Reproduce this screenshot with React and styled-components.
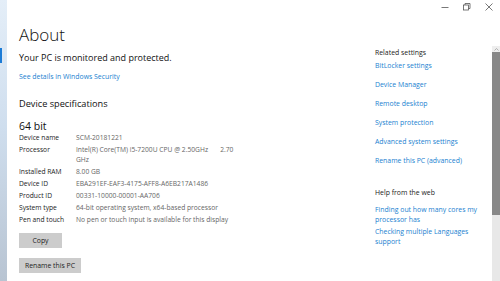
import React from "react";
import styled, { createGlobalStyle } from "styled-components";

const GlobalStyle = createGlobalStyle`
  html, body {
    margin: 0;
    padding: 0;
    background: #ffffff;
  }
  body {
    font-family: "Open Sans", "Noto Sans", sans-serif;
    color: #000;
  }
`;

const Window = styled.div`
  width: 500px;
  height: 281px;
  display: grid;
  grid-template-columns: 7px 1fr;
  overflow: hidden;
  background: #fff;
`;

const Strip = styled.div`
  position: relative;
  background: linear-gradient(180deg, #e4eef8 0%, #cfdeee 45%, #b8c4d2 100%);
`;

const Accent = styled.div`
  position: absolute;
  left: 0;
  top: 48px;
  width: 2px;
  height: 15px;
  background: #1b7bd6;
`;

const Main = styled.div`
  display: flex;
  flex-direction: column;
  min-width: 0;
`;

const TitleBar = styled.div`
  height: 14px;
  display: flex;
  justify-content: flex-end;
  align-items: center;
`;

const WinButton = styled.div`
  width: 22px;
  height: 14px;
  display: flex;
  align-items: center;
  justify-content: center;
`;

const Body = styled.div`
  flex: 1;
  display: grid;
  grid-template-columns: 1fr 117px 8px;
`;

const Content = styled.div`
  padding: 10px 0 0 12px;
  display: flex;
  flex-direction: column;
`;

const Title = styled.h1`
  margin: 0;
  font-size: 17px;
  font-weight: 300;
  line-height: 22px;
  color: #111;
`;

const Status = styled.div`
  margin-top: 5px;
  font-size: 9px;
  line-height: 14px;
  color: #111;
`;

const Link = styled.a`
  display: block;
  color: #1a7fd0;
  font-size: 6.9px;
  line-height: 10px;
  text-decoration: none;
  margin-top: ${(p) => p.$mt || "0"};
`;

const SectionTitle = styled.h2`
  margin: 14px 0 0;
  font-size: 9.2px;
  font-weight: 400;
  line-height: 16px;
  color: #111;
`;

const Bits = styled.div`
  margin-top: 8px;
  font-size: 10.5px;
  line-height: 13px;
  color: #111;
`;

const SpecTable = styled.div`
  display: grid;
  grid-template-columns: 57px 158px;
  row-gap: 2px;
  font-size: 6.7px;
  line-height: 10px;
`;

const Label = styled.div`
  color: #222;
`;

const Value = styled.div`
  color: #666;
  white-space: pre-wrap;
`;

const Button = styled.button`
  align-self: flex-start;
  margin-top: ${(p) => p.$mt};
  width: ${(p) => p.$w};
  height: 15px;
  border: none;
  background: #cccccc;
  font-family: inherit;
  font-size: 6.9px;
  color: #222;
  padding: 0;
`;

const Side = styled.div`
  padding: 34px 10px 0 0;
  display: flex;
  flex-direction: column;
`;

const SideHeading = styled.div`
  font-size: 6.9px;
  line-height: 10px;
  color: #222;
  margin-top: ${(p) => p.$mt || "0"};
`;

const Scroll = styled.div`
  display: flex;
  flex-direction: column;
  padding-top: 32px;
`;

const ScrollArrow = styled.div`
  height: 6px;
  background: #eeeeee;
  display: flex;
  align-items: center;
  justify-content: center;
`;

const Thumb = styled.div`
  height: 163px;
  background: #888888;
`;

const Track = styled.div`
  flex: 1;
  background: #e8e8e8;
`;

const specs = [
  ["Device name", "SCM-20181221"],
  ["Processor", "Intel(R) Core(TM) i5-7200U CPU @ 2.50GHz       2.70 GHz"],
  ["Installed RAM", "8.00 GB"],
  ["Device ID", "EBA291EF-EAF3-4175-AFF8-A6EB217A1486"],
  ["Product ID", "00331-10000-00001-AA706"],
  ["System type", "64-bit operating system, x64-based processor"],
  ["Pen and touch", "No pen or touch input is available for this display"],
];

const related = [
  "BitLocker settings",
  "Device Manager",
  "Remote desktop",
  "System protection",
  "Advanced system settings",
  "Rename this PC (advanced)",
];

const App = () => {
  return (
    <>
      <GlobalStyle />
      <Window>
        <Strip>
          <Accent />
        </Strip>
        <Main>
          <TitleBar>
            <WinButton>
              <svg width="8" height="8" viewBox="0 0 8 8">
                <path d="M0.5 4.5h7" stroke="#555" strokeWidth="0.8" />
              </svg>
            </WinButton>
            <WinButton>
              <svg width="8" height="8" viewBox="0 0 8 8">
                <rect x="0.5" y="2" width="5" height="5" fill="none" stroke="#555" strokeWidth="0.8" />
                <path d="M2 2V0.5h5v5H5.5" fill="none" stroke="#555" strokeWidth="0.8" />
              </svg>
            </WinButton>
            <WinButton>
              <svg width="8" height="8" viewBox="0 0 8 8">
                <path d="M0.5 0.5l7 7M7.5 0.5l-7 7" stroke="#555" strokeWidth="0.8" />
              </svg>
            </WinButton>
          </TitleBar>
          <Body>
            <Content>
              <Title>About</Title>
              <Status>Your PC is monitored and protected.</Status>
              <Link href="#" $mt="7px">See details in Windows Security</Link>
              <SectionTitle>Device specifications</SectionTitle>
              <Bits>64 bit</Bits>
              <SpecTable>
                {specs.map(([k, v]) => (
                  <React.Fragment key={k}>
                    <Label>{k}</Label>
                    <Value>{v}</Value>
                  </React.Fragment>
                ))}
              </SpecTable>
              <Button $mt="8px" $w="43px">Copy</Button>
              <Button $mt="10px" $w="62px">Rename this PC</Button>
            </Content>
            <Side>
              <SideHeading>Related settings</SideHeading>
              {related.map((r, i) => (
                <Link key={r} href="#" $mt={i === 0 ? "3px" : "9px"}>
                  {r}
                </Link>
              ))}
              <SideHeading $mt="22px">Help from the web</SideHeading>
              <Link href="#" $mt="7px">
                Finding out how many cores my processor has
              </Link>
              <Link href="#" $mt="2px">
                Checking multiple Languages support
              </Link>
            </Side>
            <Scroll>
              <ScrollArrow>
                <svg width="5" height="3" viewBox="0 0 5 3">
                  <path d="M0.5 2.5l2-2 2 2" fill="none" stroke="#999" strokeWidth="0.7" />
                </svg>
              </ScrollArrow>
              <Thumb />
              <Track />
            </Scroll>
          </Body>
        </Main>
      </Window>
    </>
  );
};

export default App;
